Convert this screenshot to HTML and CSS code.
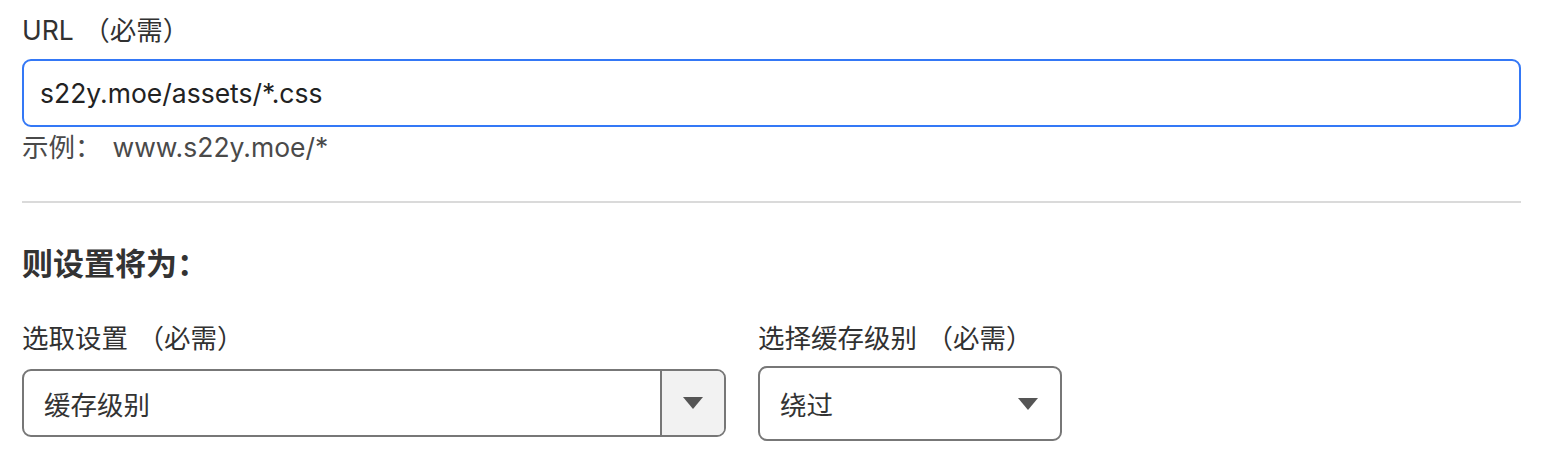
FILE: index.html
```html
<!DOCTYPE html>
<html lang="zh-CN">

<head>
  <meta charset="UTF-8">
  <meta name="viewport" content="width=device-width, initial-scale=1.0">
  <title>页面规则</title>
  <link rel="stylesheet" href="styles.css">
</head>

<body>
  <form id="rule-form">
    <div class="field">
      <label class="field-label" for="url">URL <span class="req">（必需）</span></label>
      <input class="text-input" id="url" type="text" value="s22y.moe/assets/*.css" />
      <div class="hint">示例：<span class="hint-value">www.s22y.moe/*</span></div>
    </div>

    <hr class="divider" />

    <h2 class="section-title">则设置将为：</h2>

    <div class="setting-row">
      <div class="field setting-pick">
        <label class="field-label">选取设置 <span class="req">（必需）</span></label>
        <div class="select combo">
          <span class="select-value">缓存级别</span>
          <span class="arrow-box"><span class="caret"></span></span>
        </div>
      </div>
      <div class="field setting-level">
        <label class="field-label">选择缓存级别 <span class="req">（必需）</span></label>
        <div class="select plain">
          <span class="select-value">绕过</span>
          <span class="caret"></span>
        </div>
      </div>
    </div>
  </form>
</body>

</html>
```

FILE: styles.css
```css
html, body {
  margin: 0;
  background: #fff;
}
body {
  font-family: Inter, "Noto Sans CJK SC", sans-serif;
  color: #313131;
  padding: 14px 0 0 22px;
}
#rule-form {
  width: 1499px;
}
.field-label {
  display: block;
  font-size: 26.5px;
  line-height: 32px;
}
.req {
  margin-left: 2px;
}
.text-input {
  display: block;
  box-sizing: border-box;
  width: 100%;
  height: 68px;
  margin: 13px 0 0;
  padding: 0 16px;
  border: 2px solid #3478f6;
  border-radius: 9px;
  outline: none;
  font-family: inherit;
  font-size: 26.5px;
  color: #222;
}
.hint {
  margin-top: 4px;
  font-size: 26.5px;
  line-height: 32px;
  color: #4a4a4a;
}
.hint-value {
  margin-left: 11px;
}
.divider {
  border: 0;
  border-top: 2px solid #dadada;
  margin: 38px 0 0;
}
.section-title {
  margin: 42px 0 0;
  font-size: 31px;
  line-height: 38px;
  font-weight: 700;
  color: #333;
}
.setting-row {
  display: flex;
  align-items: flex-start;
  gap: 32px;
  margin-top: 39px;
}
.select {
  box-sizing: border-box;
  display: flex;
  align-items: center;
  border: 2px solid #777;
  border-radius: 9px;
  font-size: 26.5px;
  color: #333;
}
.select-value {
  flex-grow: 1;
}
.combo {
  width: 704px;
  height: 68px;
  margin-top: 15px;
  overflow: hidden;
}
.combo .select-value {
  padding-left: 20px;
}
.arrow-box {
  display: flex;
  align-items: center;
  justify-content: center;
  align-self: stretch;
  width: 62px;
  border-left: 2px solid #777;
  background: #f2f2f2;
}
.plain {
  width: 304px;
  height: 75px;
  margin-top: 12px;
  padding: 0 22px 0 20px;
}
.caret {
  width: 0;
  height: 0;
  border-left: 10px solid transparent;
  border-right: 10px solid transparent;
  border-top: 12px solid #555;
}
```
